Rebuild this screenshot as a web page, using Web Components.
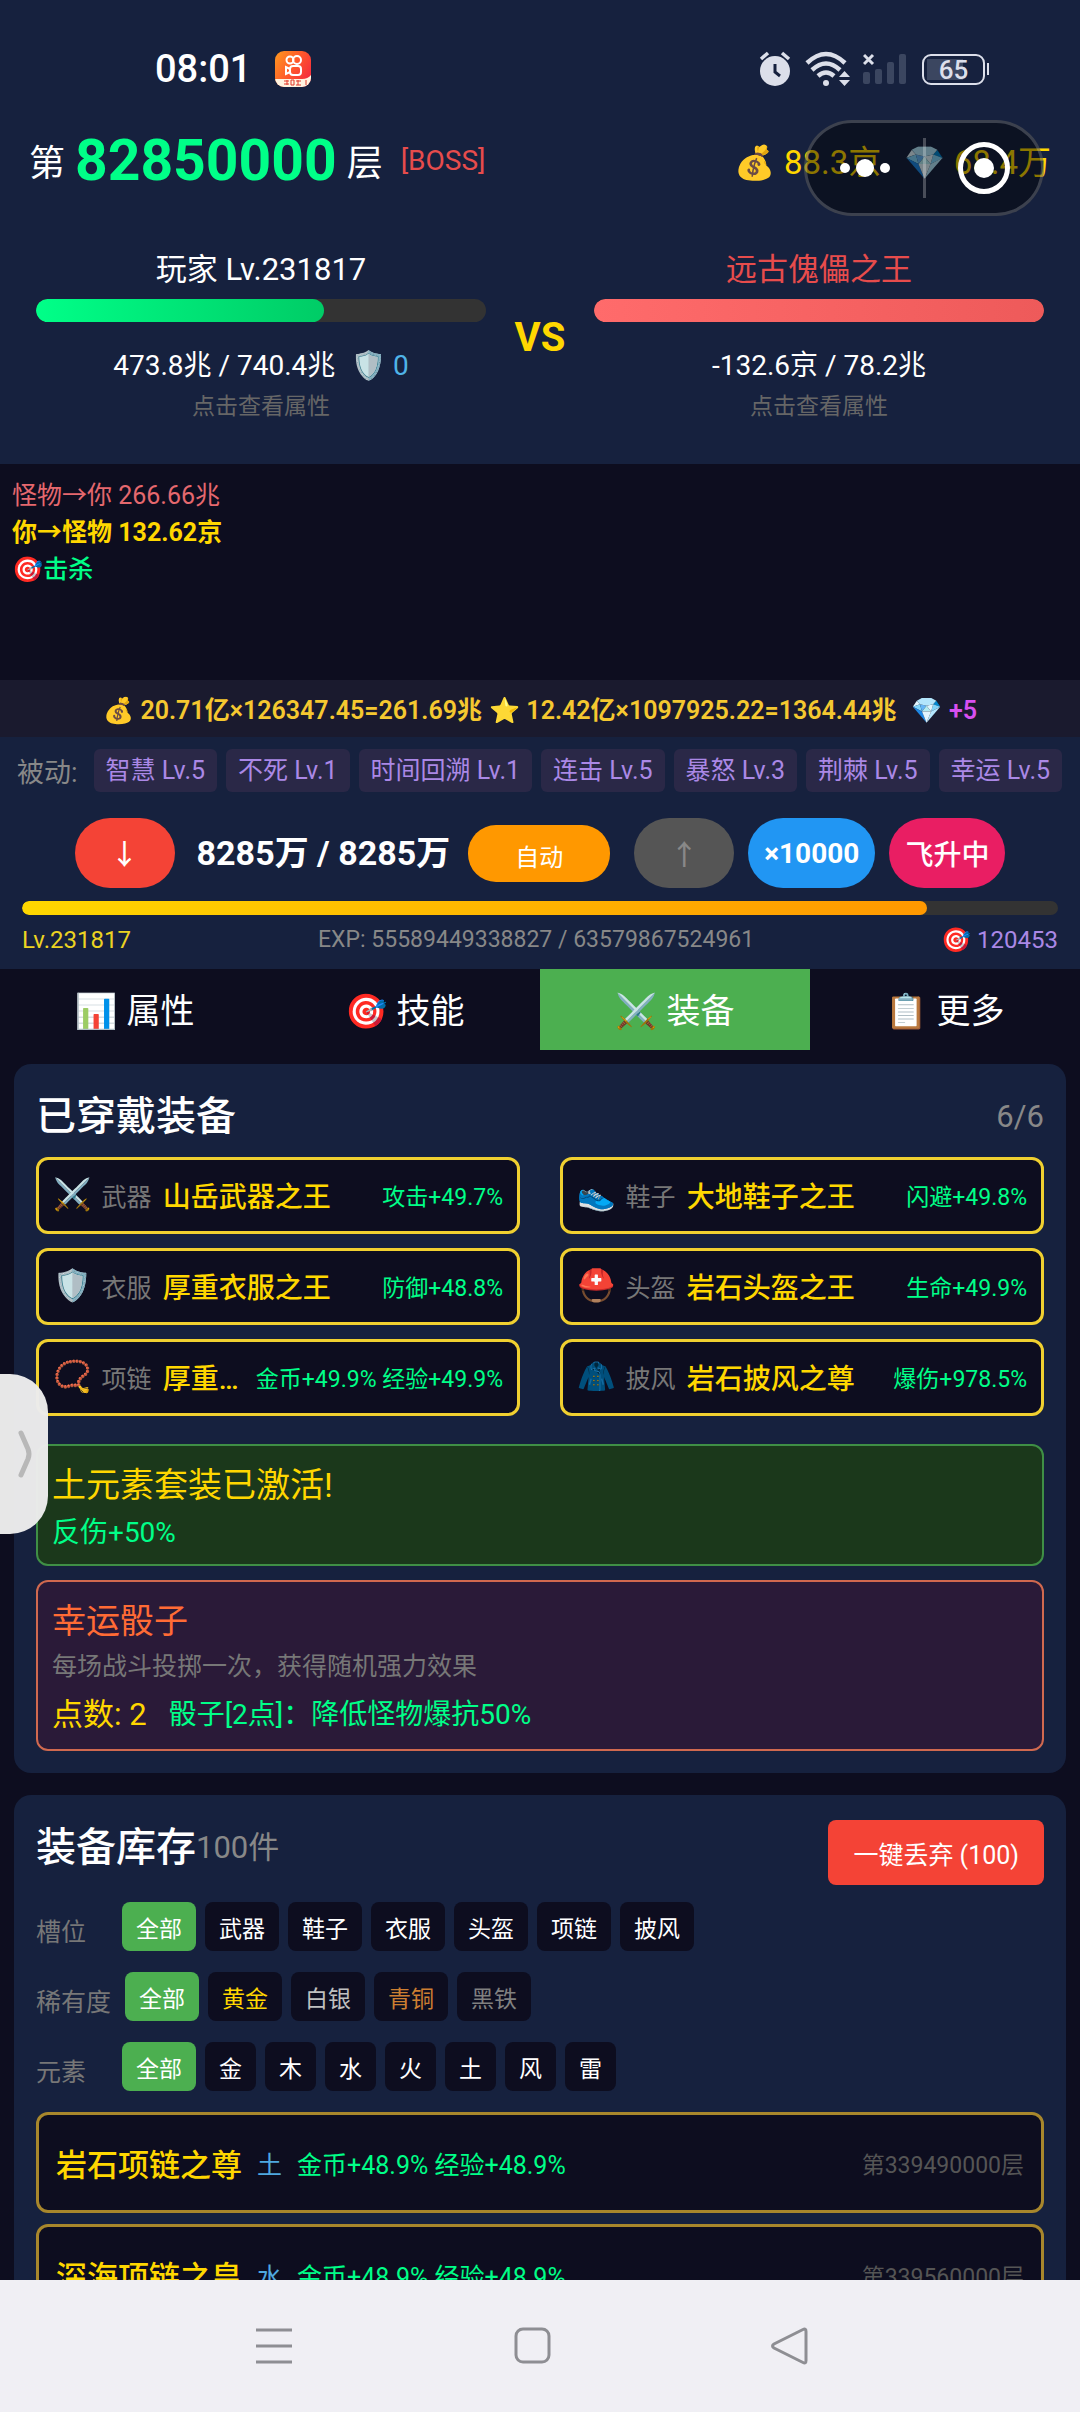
<!DOCTYPE html>
<html lang="zh-CN">
<head>
    <meta charset="UTF-8">
    <meta name="viewport" content="width=device-width, initial-scale=1.0">
    <title>装备</title>
    <style>
        html, body {
            height: 100%;
            margin: 0;
            overflow: hidden;
            background: #0d0d1f;
        }

        body {
            font-family: Roboto, "Noto Sans CJK SC", "Noto Color Emoji", sans-serif;
            color: #fff;
        }
    </style>
</head>
<body>
    <game-app></game-app>

    <script>
        // No margin or padding reset on *: it would override the :host rules of nested elements
        const baseStyle = `
            * {
                box-sizing: border-box;
            }

            p, h2, h3 {
                margin: 0;
            }

            button {
                padding: 0;
                font-family: inherit;
                color: inherit;
                border: 0;
                cursor: pointer;
            }
        `;

        class BaseElement extends HTMLElement {
            constructor() {
                super();
                this.shadowDOM = this.attachShadow({ mode: "open" });
            }

            connectedCallback() {
                this.shadowDOM.innerHTML = `<style>${baseStyle}${this.styles()}</style>${this.markup()}`;
            }

            styles() {
                return "";
            }

            markup() {
                return "<slot></slot>";
            }
        }

        // Phone status bar: clock on the left, radios and battery on the right
        class StatusBar extends BaseElement {
            styles() {
                return `
                    :host {
                        display: flex;
                        align-items: center;
                        height: 42px;
                        margin-top: 48px;
                        padding: 0 91px 0 155px;
                    }

                    time {
                        font-size: 38px;
                        font-weight: 500;
                        line-height: 42px;
                        margin-right: 24px;
                    }

                    .radios {
                        display: flex;
                        align-items: center;
                        gap: 12px;
                        margin-left: auto;
                        color: #dcdfea;
                    }

                    .battery {
                        display: flex;
                        align-items: center;
                        margin-left: 3px;
                    }

                    .battery span {
                        width: 63px;
                        height: 31px;
                        border: 2px solid #dcdfea;
                        border-radius: 9px;
                        font-size: 26px;
                        font-weight: 500;
                        line-height: 28px;
                        text-align: center;
                        background: linear-gradient(#3b4660, #3b4660) 3px 3px / 36px 21px no-repeat;
                    }

                    .battery i {
                        width: 2px;
                        height: 12px;
                        margin-left: 2px;
                        background: #dcdfea;
                    }
                `;
            }

            markup() {
                return `
                    <time>08:01</time>
                    <svg width="36" height="36" viewBox="0 0 36 36">
                        <defs>
                            <linearGradient id="app" x1="0" y1="0" x2="1" y2="0.6">
                                <stop offset="0" stop-color="#ff9a1f"/>
                                <stop offset="0.55" stop-color="#ff5a2a"/>
                                <stop offset="1" stop-color="#f5303c"/>
                            </linearGradient>
                            <clipPath id="round"><rect width="36" height="36" rx="9"/></clipPath>
                        </defs>
                        <g clip-path="url(#round)">
                            <rect width="36" height="36" fill="url(#app)"/>
                            <g fill="none" stroke="#fff" stroke-width="2">
                                <circle cx="15" cy="9" r="3.5"/>
                                <circle cx="22" cy="9" r="4"/>
                                <rect x="15" y="15" width="11" height="9" rx="3"/>
                                <path d="M15 18l-4-2v7l4-2"/>
                            </g>
                            <path d="M0 28h27q6 0 9-4v12H0z" fill="#fff3e0"/>
                            <path d="M9 30h5M9 33h5M12 29v5M16 29v5h3v-5zM21 30h5M23 29v5M21 34h5M31 29v5" stroke="#e0392b" stroke-width="1" fill="none"/>
                        </g>
                    </svg>
                    <div class="radios">
                        <svg width="34" height="36" viewBox="0 0 34 36">
                            <circle cx="16" cy="20" r="15" fill="currentColor"/>
                            <path d="M2 8l7-6M30 8l-7-6" stroke="currentColor" stroke-width="3.5"/>
                            <path d="M16 13v8l5 4" fill="none" stroke="#16213e" stroke-width="3"/>
                        </svg>
                        <svg width="46" height="36" viewBox="0 0 46 36">
                            <g fill="none" stroke="currentColor" stroke-width="4.5">
                                <path d="M2 12q19-18 38 0"/>
                                <path d="M7 19q14-13 28 0"/>
                                <path d="M13 25q8-7 16 0"/>
                            </g>
                            <circle cx="21" cy="32" r="3" fill="currentColor"/>
                            <path d="M34 26l5.500-6 5.500 6zM34 29l5.500 6 5.500-6z" fill="currentColor"/>
                        </svg>
                        <svg width="44" height="36" viewBox="0 0 44 36">
                            <path d="M1 4l9 9M10 4l-9 9" stroke="currentColor" stroke-width="3"/>
                            <g fill="#3b4660">
                                <rect x="0" y="21" width="7" height="12" rx="2"/>
                                <rect x="12" y="18" width="7" height="15" rx="2"/>
                                <rect x="24" y="11" width="7" height="22" rx="2"/>
                                <rect x="36" y="3" width="7" height="30" rx="2"/>
                            </g>
                        </svg>
                        <div class="battery"><span>65</span><i></i></div>
                    </div>
                `;
            }
        }

        // Floating capsule of the host app, lies over the currency row
        class HostCapsule extends BaseElement {
            styles() {
                return `
                    :host {
                        position: absolute;
                        top: 120px;
                        right: 36px;
                        display: flex;
                        width: 240px;
                        height: 96px;
                        border: 3px solid rgba(255, 255, 255, 0.2);
                        border-radius: 48px;
                        background: rgba(0, 0, 0, 0.45);
                    }

                    button {
                        flex: 1;
                        display: grid;
                        place-items: center;
                        background: none;
                    }

                    i {
                        width: 3px;
                        height: 60px;
                        margin-top: 15px;
                        background: rgba(255, 255, 255, 0.25);
                    }
                `;
            }

            markup() {
                return `
                    <button aria-label="更多">
                        <svg width="52" height="20" viewBox="0 0 52 20" fill="#fff">
                            <circle cx="6" cy="10" r="5"/>
                            <circle cx="26" cy="10" r="9"/>
                            <circle cx="46" cy="10" r="5"/>
                        </svg>
                    </button>
                    <i></i>
                    <button aria-label="关闭">
                        <svg width="54" height="54" viewBox="0 0 54 54">
                            <circle cx="28" cy="27" r="23.500" fill="none" stroke="#fff" stroke-width="5"/>
                            <circle cx="28" cy="27" r="10" fill="#fff"/>
                        </svg>
                    </button>
                `;
            }
        }

        class StageBar extends BaseElement {
            styles() {
                return `
                    :host {
                        display: flex;
                        align-items: center;
                        height: 72px;
                        margin-top: 34px;
                        padding: 0 29px;
                        font-size: 36px;
                    }

                    b {
                        margin: 0 10px;
                        font-size: 57px;
                        color: #00ff88;
                    }

                    .boss {
                        margin-left: 18px;
                        font-size: 28px;
                        color: #e74c4c;
                    }

                    .money {
                        display: flex;
                        gap: 23px;
                        margin-left: auto;
                        font-size: 33px;
                        color: #ffd700;
                    }
                `;
            }

            markup() {
                return `
                    <span>第</span><b>82850000</b><span>层</span>
                    <span class="boss">[BOSS]</span>
                    <div class="money"><span>💰 88.3京</span><span>💎 68.4万</span></div>
                `;
            }
        }

        class FighterPanel extends BaseElement {
            styles() {
                return `
                    :host {
                        display: block;
                        flex: 1;
                        text-align: center;
                    }

                    h2 {
                        font-size: 31px;
                        font-weight: 400;
                        line-height: 36px;
                        color: var(--name-color, #fff);
                    }

                    .bar {
                        height: 23px;
                        margin: 11px 0 26px;
                        border-radius: 12px;
                        background: #333;
                        overflow: hidden;
                    }

                    .bar div {
                        width: ${this.getAttribute("hp")}%;
                        height: 100%;
                        border-radius: 12px;
                        background: linear-gradient(90deg, var(--bar-from), var(--bar-to));
                    }

                    .hp {
                        font-size: 28px;
                        line-height: 36px;
                    }

                    .hint {
                        margin-top: 8px;
                        font-size: 23px;
                        line-height: 30px;
                        color: #666;
                    }
                `;
            }

            markup() {
                return `
                    <h2><slot name="name"></slot></h2>
                    <div class="bar"><div></div></div>
                    <p class="hp"><slot></slot></p>
                    <p class="hint">点击查看属性</p>
                `;
            }
        }

        class BattleDuel extends BaseElement {
            styles() {
                return `
                    :host {
                        display: flex;
                        align-items: center;
                        padding: 56px 36px 42px;
                    }

                    .vs {
                        width: 108px;
                        font-size: 40px;
                        font-weight: 700;
                        text-align: center;
                        color: #ffd700;
                    }

                    .player {
                        --bar-from: #00ff88;
                        --bar-to: #00cc66;
                    }

                    .boss {
                        --name-color: #e74c4c;
                        --bar-from: #ff6b6b;
                        --bar-to: #ee5a5a;
                    }

                    .shield {
                        margin-left: 16px;
                        color: #4fb3e8;
                    }
                `;
            }

            markup() {
                return `
                    <fighter-panel class="player" hp="64">
                        <span slot="name">玩家 Lv.231817</span>
                        473.8兆 / 740.4兆<span class="shield">🛡️ 0</span>
                    </fighter-panel>
                    <div class="vs">VS</div>
                    <fighter-panel class="boss" hp="100">
                        <span slot="name">远古傀儡之王</span>
                        -132.6京 / 78.2兆
                    </fighter-panel>
                `;
            }
        }

        class BattleLog extends BaseElement {
            styles() {
                return `
                    :host {
                        display: block;
                        min-height: 216px;
                        padding: 13px 12px;
                        font-size: 25px;
                        line-height: 37px;
                    }

                    .hurt {
                        color: #e5686e;
                    }

                    .hit {
                        font-weight: 700;
                        color: #ffd700;
                    }

                    .kill {
                        font-weight: 500;
                        color: #00ff88;
                    }
                `;
            }

            markup() {
                return `
                    <p class="hurt">怪物→你 266.66兆</p>
                    <p class="hit">你→怪物 132.62京</p>
                    <p class="kill">🎯击杀</p>
                `;
            }
        }

        class DropLine extends BaseElement {
            styles() {
                return `
                    :host {
                        display: flex;
                        justify-content: center;
                        gap: 7px;
                        padding: 13px 0 8px;
                        font-size: 25px;
                        font-weight: 600;
                        line-height: 36px;
                        color: #f5c830;
                        background: #1a1a2e;
                        white-space: nowrap;
                    }

                    .gem {
                        margin-left: 8px;
                        color: #d850f0;
                    }
                `;
            }

            markup() {
                return `
                    <span>💰 20.71亿×126347.45=261.69兆</span>
                    <span>⭐ 12.42亿×1097925.22=1364.44兆</span>
                    <span class="gem">💎 +5</span>
                `;
            }
        }

        class PassiveList extends BaseElement {
            styles() {
                return `
                    :host {
                        display: flex;
                        align-items: center;
                        gap: 9px;
                        padding: 12px 17px 0;
                        white-space: nowrap;
                    }

                    .label {
                        margin-right: 7px;
                        font-size: 27px;
                        color: #888;
                    }

                    .chip {
                        padding: 0 12px;
                        border-radius: 6px;
                        font-size: 25px;
                        line-height: 43px;
                        color: #ab88e6;
                        background: #2a2847;
                    }
                `;
            }

            markup() {
                const skills = ["智慧 Lv.5", "不死 Lv.1", "时间回溯 Lv.1", "连击 Lv.5", "暴怒 Lv.3", "荆棘 Lv.5", "幸运 Lv.5"];
                return `
                    <span class="label">被动:</span>
                    ${skills.map((skill) => `<span class="chip">${skill}</span>`).join("")}
                `;
            }
        }

        class StageControls extends BaseElement {
            styles() {
                return `
                    :host {
                        display: flex;
                        align-items: center;
                        justify-content: center;
                        gap: 14px;
                        padding: 26px 0 13px;
                        white-space: nowrap;
                    }

                    button {
                        height: 70px;
                        padding: 0 16px;
                        border-radius: 35px;
                        font-size: 28px;
                        font-weight: 700;
                    }

                    .arrow {
                        width: 100px;
                        font-weight: 500;
                    }

                    .down {
                        background: #f44336;
                    }

                    .up {
                        margin-left: 10px;
                        color: #888;
                        background: #555;
                    }

                    .auto {
                        width: 142px;
                        height: 57px;
                        padding-top: 4px;
                        border-radius: 28px;
                        font-size: 24px;
                        font-weight: 400;
                        background: #ff9800;
                    }

                    .step {
                        background: #2196f3;
                    }

                    .rise {
                        font-weight: 500;
                        background: #e91e63;
                    }

                    strong {
                        margin: 0 4px 0 8px;
                        font-size: 34px;
                        line-height: 36px;
                    }
                `;
            }

            markup() {
                return `
                    <button class="arrow down">↓</button>
                    <strong>8285万 / 8285万</strong>
                    <button class="auto">自动</button>
                    <button class="arrow up" disabled>↑</button>
                    <button class="step">×10000</button>
                    <button class="rise">飞升中</button>
                `;
            }
        }

        class ExpBar extends BaseElement {
            styles() {
                return `
                    :host {
                        display: block;
                        padding: 0 22px 14px;
                    }

                    .bar {
                        height: 14px;
                        border-radius: 7px;
                        background: #333;
                        overflow: hidden;
                    }

                    .bar div {
                        width: 87.4%;
                        height: 100%;
                        border-radius: 7px;
                        background: linear-gradient(90deg, #ffd700, #ff9800);
                    }

                    .info {
                        display: flex;
                        justify-content: space-between;
                        margin-top: 10px;
                        font-size: 24px;
                        line-height: 30px;
                        color: #ab88e6;
                    }

                    .level {
                        color: #ecd322;
                    }

                    .exp {
                        font-size: 23px;
                        color: #888;
                    }
                `;
            }

            markup() {
                return `
                    <div class="bar"><div></div></div>
                    <div class="info">
                        <span class="level">Lv.231817</span>
                        <span class="exp">EXP: 55589449338827 / 63579867524961</span>
                        <span>🎯 120453</span>
                    </div>
                `;
            }
        }

        class TabBar extends BaseElement {
            styles() {
                return `
                    :host {
                        display: grid;
                        grid-template-columns: repeat(4, 1fr);
                    }

                    button {
                        height: 81px;
                        padding-bottom: 2px;
                        font-size: 34px;
                        background: none;
                    }

                    .active {
                        background: #4caf50;
                    }
                `;
            }

            markup() {
                return `
                    <button>📊 属性</button>
                    <button>🎯 技能</button>
                    <button class="active">⚔️ 装备</button>
                    <button>📋 更多</button>
                `;
            }
        }

        class PanelCard extends BaseElement {
            styles() {
                return `
                    :host {
                        display: block;
                        padding: 25px 22px 22px;
                        border-radius: 17px;
                        background: #16213e;
                    }

                    header {
                        display: flex;
                        align-items: flex-start;
                        line-height: 56px;
                    }

                    h2 {
                        font-size: 40px;
                        font-weight: 500;
                    }

                    ::slotted([slot="count"]) {
                        font-size: 31px;
                        color: #888;
                    }
                `;
            }

            markup() {
                return `
                    <header>
                        <h2><slot name="title"></slot></h2>
                        <slot name="count"></slot>
                        <slot name="action"></slot>
                    </header>
                    <slot></slot>
                `;
            }
        }

        class EquipSlot extends BaseElement {
            styles() {
                return `
                    :host {
                        display: flex;
                        align-items: center;
                        height: 77px;
                        padding: 0 14px 2px;
                        border: 3px solid #f0d030;
                        border-radius: 12px;
                        background: #0d0d1f;
                        white-space: nowrap;
                        min-width: 0;
                    }

                    .icon {
                        margin-right: 10px;
                        font-size: 31px;
                    }

                    .type {
                        margin-right: 11px;
                        font-size: 25px;
                        color: #777;
                    }

                    .name {
                        flex: 1;
                        min-width: 0;
                        overflow: hidden;
                        text-overflow: ellipsis;
                        font-size: 28px;
                        font-weight: 500;
                        color: #ffd700;
                    }

                    .stat {
                        margin-left: 10px;
                        font-size: 23px;
                        color: #00ff88;
                    }
                `;
            }

            markup() {
                return `
                    <span class="icon">${this.getAttribute("icon")}</span>
                    <span class="type">${this.getAttribute("type")}</span>
                    <span class="name">${this.getAttribute("name")}</span>
                    <span class="stat"><slot></slot></span>
                `;
            }
        }

        class BonusBox extends BaseElement {
            styles() {
                return `
                    :host {
                        display: block;
                        padding: 17px 14px 12px;
                        border: 2px solid var(--line);
                        border-radius: 12px;
                        background: var(--fill);
                        font-size: 28px;
                        line-height: 38px;
                        color: #00ff88;
                    }

                    h3 {
                        margin-bottom: 7px;
                        font-size: 34px;
                        font-weight: 400;
                        line-height: 44px;
                        color: var(--heading);
                    }
                `;
            }

            markup() {
                return `<h3><slot name="title"></slot></h3><slot></slot>`;
            }
        }

        class FilterRow extends BaseElement {
            styles() {
                return `
                    :host {
                        display: flex;
                        align-items: center;
                        gap: 14px;
                    }

                    .label {
                        min-width: 72px;
                        font-size: 25px;
                        line-height: 30px;
                        color: #777;
                    }

                    .options {
                        display: flex;
                        gap: 9px;
                        margin-bottom: 12px;
                    }

                    button {
                        height: 49px;
                        padding: 0 14px;
                        border-radius: 8px;
                        font-size: 23px;
                        background: #0d0d1f;
                    }

                    button:first-child {
                        background: #4caf50;
                    }
                `;
            }

            markup() {
                const colors = { "黄金": "#ffd700", "白银": "#c0c0c0", "青铜": "#cd7f32", "黑铁": "#808080" };
                const options = this.getAttribute("options").split(",");
                return `
                    <span class="label" id="label">${this.getAttribute("label")}</span>
                    <div class="options" role="group" aria-labelledby="label">
                        ${options.map((name) => `<button style="color: ${colors[name] || "#fff"}">${name}</button>`).join("")}
                    </div>
                `;
            }
        }

        class StockItem extends BaseElement {
            styles() {
                return `
                    :host {
                        display: flex;
                        align-items: center;
                        height: 101px;
                        padding: 0 17px;
                        border: 3px solid #a8872c;
                        border-radius: 12px;
                        background: #0d0d1f;
                        font-size: 25px;
                        white-space: nowrap;
                    }

                    .name {
                        font-size: 31px;
                        font-weight: 500;
                        color: #ffd700;
                    }

                    .element {
                        margin: 0 15px;
                        color: #4fa8e0;
                    }

                    .stat {
                        color: #00ff88;
                    }

                    .floor {
                        margin-left: auto;
                        font-size: 23px;
                        color: #555;
                    }
                `;
            }

            markup() {
                return `
                    <span class="name">${this.getAttribute("name")}</span>
                    <span class="element">${this.getAttribute("element")}</span>
                    <span class="stat"><slot></slot></span>
                    <span class="floor">${this.getAttribute("floor")}</span>
                `;
            }
        }

        class WornPanel extends BaseElement {
            styles() {
                return `
                    :host {
                        display: block;
                    }

                    [slot="count"] {
                        margin-left: auto;
                    }

                    .grid {
                        display: grid;
                        grid-template-columns: 1fr 1fr;
                        gap: 14px 40px;
                        margin: 12px 0 28px;
                    }

                    .set {
                        --line: #3f8f45;
                        --fill: #1b381b;
                        --heading: #ffd700;
                        margin-bottom: 14px;
                    }

                    .dice {
                        --line: #d0694f;
                        --fill: #2a1a38;
                        --heading: #ff6b35;
                    }

                    .desc {
                        font-size: 25px;
                        line-height: 34px;
                        color: #777;
                    }

                    .roll {
                        display: flex;
                        gap: 22px;
                        margin: 11px 0 2px;
                        line-height: 40px;
                    }

                    .points {
                        font-size: 31px;
                        color: #ffd700;
                    }
                `;
            }

            markup() {
                return `
                    <panel-card>
                        <span slot="title">已穿戴装备</span>
                        <span slot="count">6/6</span>
                        <div class="grid">
                            <equip-slot icon="⚔️" type="武器" name="山岳武器之王">攻击+49.7%</equip-slot>
                            <equip-slot icon="👟" type="鞋子" name="大地鞋子之王">闪避+49.8%</equip-slot>
                            <equip-slot icon="🛡️" type="衣服" name="厚重衣服之王">防御+48.8%</equip-slot>
                            <equip-slot icon="⛑️" type="头盔" name="岩石头盔之王">生命+49.9%</equip-slot>
                            <equip-slot icon="📿" type="项链" name="厚重项链之王">金币+49.9% 经验+49.9%</equip-slot>
                            <equip-slot icon="🧥" type="披风" name="岩石披风之尊">爆伤+978.5%</equip-slot>
                        </div>
                        <bonus-box class="set">
                            <span slot="title">土元素套装已激活!</span>
                            <p>反伤+50%</p>
                        </bonus-box>
                        <bonus-box class="dice">
                            <span slot="title">幸运骰子</span>
                            <p class="desc">每场战斗投掷一次，获得随机强力效果</p>
                            <p class="roll"><span class="points">点数: 2</span><span>骰子[2点]：降低怪物爆抗50%</span></p>
                        </bonus-box>
                    </panel-card>
                `;
            }
        }

        class StockPanel extends BaseElement {
            styles() {
                return `
                    :host {
                        display: block;
                    }

                    .discard {
                        height: 65px;
                        margin-left: auto;
                        padding: 0 25px;
                        border-radius: 8px;
                        font-size: 25px;
                        background: #f44336;
                    }

                    .filters {
                        display: grid;
                        gap: 9px;
                        margin: 17px 0 9px;
                    }

                    .list {
                        display: grid;
                        gap: 11px;
                    }
                `;
            }

            markup() {
                return `
                    <panel-card>
                        <span slot="title">装备库存</span>
                        <span slot="count">100件</span>
                        <button slot="action" class="discard">一键丢弃 (100)</button>
                        <div class="filters">
                            <filter-row label="槽位" options="全部,武器,鞋子,衣服,头盔,项链,披风"></filter-row>
                            <filter-row label="稀有度" options="全部,黄金,白银,青铜,黑铁"></filter-row>
                            <filter-row label="元素" options="全部,金,木,水,火,土,风,雷"></filter-row>
                        </div>
                        <div class="list">
                            <stock-item name="岩石项链之尊" element="土" floor="第339490000层">金币+48.9% 经验+48.9%</stock-item>
                            <stock-item name="深海项链之皇" element="水" floor="第339560000层">金币+48.9% 经验+48.9%</stock-item>
                        </div>
                    </panel-card>
                `;
            }
        }

        // Pull-out tab on the left screen edge
        class SideHandle extends BaseElement {
            styles() {
                return `
                    :host {
                        position: absolute;
                        left: 0;
                        top: 1374px;
                    }

                    button {
                        display: flex;
                        align-items: center;
                        justify-content: flex-end;
                        width: 48px;
                        height: 160px;
                        padding-right: 14px;
                        border-radius: 0 38px 38px 0;
                        background: rgba(236, 236, 236, 0.98);
                    }
                `;
            }

            markup() {
                return `
                    <button aria-label="展开">
                        <svg width="18" height="50" viewBox="0 0 18 50">
                            <path d="M5 4l7 16q2 5 0 10l-7 16" fill="none" stroke="#b8b8b8" stroke-width="5" stroke-linecap="round"/>
                        </svg>
                    </button>
                `;
            }
        }

        class SystemNav extends BaseElement {
            styles() {
                return `
                    :host {
                        display: flex;
                        justify-content: center;
                        align-items: center;
                        gap: 218px;
                        height: 132px;
                        padding-right: 16px;
                        background: #f0eff4;
                        z-index: 1;
                    }

                    button {
                        width: 40px;
                        height: 40px;
                        background: none;
                    }

                    svg {
                        display: block;
                        fill: none;
                        stroke: #8e8e93;
                        stroke-width: 3;
                    }
                `;
            }

            markup() {
                return `
                    <button aria-label="菜单"><svg width="40" height="40"><path d="M2 4h36M2 20h36M2 36h36"/></svg></button>
                    <button aria-label="主页"><svg width="40" height="40"><rect x="4" y="3" width="33" height="33" rx="7"/></svg></button>
                    <button aria-label="返回"><svg width="40" height="40"><path d="M33 3.500q3-1.500 3 2v29q0 3.500-3 2L4 22q-3-2 0-4z"/></svg></button>
                `;
            }
        }

        class GameApp extends BaseElement {
            styles() {
                return `
                    :host {
                        position: relative;
                        display: flex;
                        flex-direction: column;
                        height: 100vh;
                        overflow: hidden;
                    }

                    .screen {
                        flex: 1;
                        min-height: 0;
                        overflow: hidden;
                    }

                    .navy {
                        display: flow-root;
                        background: #16213e;
                    }

                    main {
                        display: grid;
                        grid-template-columns: minmax(0, 1fr);
                        gap: 22px;
                        padding: 14px;
                    }
                `;
            }

            markup() {
                return `
                    <div class="screen">
                        <div class="navy">
                            <status-bar></status-bar>
                            <stage-bar></stage-bar>
                            <battle-duel></battle-duel>
                        </div>
                        <battle-log></battle-log>
                        <drop-line></drop-line>
                        <div class="navy">
                            <passive-list></passive-list>
                            <stage-controls></stage-controls>
                            <exp-bar></exp-bar>
                        </div>
                        <tab-bar></tab-bar>
                        <main>
                            <worn-panel></worn-panel>
                            <stock-panel></stock-panel>
                        </main>
                    </div>
                    <system-nav></system-nav>
                    <host-capsule></host-capsule>
                    <side-handle></side-handle>
                `;
            }
        }

        customElements.define("status-bar", StatusBar);
        customElements.define("host-capsule", HostCapsule);
        customElements.define("stage-bar", StageBar);
        customElements.define("fighter-panel", FighterPanel);
        customElements.define("battle-duel", BattleDuel);
        customElements.define("battle-log", BattleLog);
        customElements.define("drop-line", DropLine);
        customElements.define("passive-list", PassiveList);
        customElements.define("stage-controls", StageControls);
        customElements.define("exp-bar", ExpBar);
        customElements.define("tab-bar", TabBar);
        customElements.define("panel-card", PanelCard);
        customElements.define("equip-slot", EquipSlot);
        customElements.define("bonus-box", BonusBox);
        customElements.define("filter-row", FilterRow);
        customElements.define("stock-item", StockItem);
        customElements.define("worn-panel", WornPanel);
        customElements.define("stock-panel", StockPanel);
        customElements.define("side-handle", SideHandle);
        customElements.define("system-nav", SystemNav);
        customElements.define("game-app", GameApp);
    </script>
</body>
</html>
